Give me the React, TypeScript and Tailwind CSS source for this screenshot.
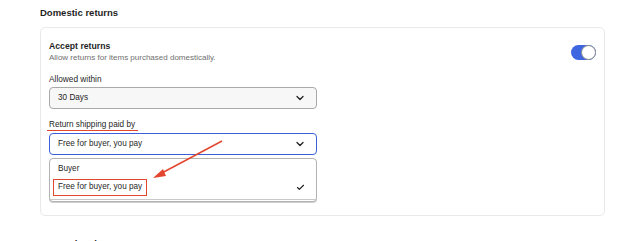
import { ChevronDown, Check } from "lucide-react";

function Toggle({ on }: { on: boolean }) {
  return (
    <div
      className={`mt-[4px] flex h-[15px] w-[25px] items-center rounded-full ${
        on ? "justify-end bg-[#3e66e0]" : "justify-start bg-gray-300"
      }`}
    >
      <div className="h-[15px] w-[15px] rounded-full border border-[#8a8a8a] bg-white" />
    </div>
  );
}

export default function App() {
  return (
    <div className="relative h-[241px] w-[640px] overflow-hidden bg-white pl-[40px] pr-[35px] font-[Liberation_Sans,Arial,sans-serif] text-[#1f1f1f]">
      <h2 className="pt-[7px] text-[9.5px] font-bold leading-[12px]">Domestic returns</h2>

      {/* Card */}
      <div className="mt-[8px] rounded-[5px] border border-[#e9e9e9] px-[8px] pb-[13px] pt-[13px]">
        <div className="flex items-start justify-between">
          <div>
            <div className="text-[8.7px] font-bold leading-[11px]">Accept returns</div>
            <div className="mt-[1px] text-[8px] leading-[10px] text-[#6f6f6f]">
              Allow returns for items purchased domestically.
            </div>
          </div>
          <Toggle on />
        </div>

        <div className="mt-[11px] text-[8.3px] leading-[10px]">Allowed within</div>
        <div className="mt-[3px] flex h-[22px] w-[268px] items-center justify-between rounded-[4px] border border-[#a9a9a9] bg-[#f7f7f7] pl-[8px] pr-[10px]">
          <span className="text-[8.2px]">30 Days</span>
          <ChevronDown className="h-[12px] w-[12px]" strokeWidth={2.5} />
        </div>

        <div className="relative mt-[11px] w-fit text-[8.2px] leading-[10px]">
          Return shipping paid by
          <span className="absolute -left-[2px] -right-[3px] bottom-[-1px] h-[1.5px] bg-[#e3462f]" />
        </div>
        <div className="mt-[3px] flex h-[22px] w-[268px] items-center justify-between rounded-[4px] border-[1.5px] border-[#3a5fd9] bg-white pl-[8px] pr-[10px]">
          <span className="text-[8.2px]">Free for buyer, you pay</span>
          <ChevronDown className="h-[12px] w-[12px]" strokeWidth={2.5} />
        </div>

        {/* Open list */}
        <div className="mt-[3px] w-[268px] rounded-[4px] border border-[#b3b3b3] bg-white pb-[1px] shadow-[0_1px_0_#d0d0d0]">
          <div className="border-b border-[#c9c9c9] pb-[2px]">
            <div className="flex h-[19px] items-center pl-[8px] pt-[1px] text-[8.2px]">Buyer</div>
            <div className="flex h-[19px] items-center justify-between pl-[3px] pr-[11px] text-[8.2px]">
              <span className="flex h-[17px] items-center border-[1.5px] border-[#e3462f] px-[4px]">
                Free for buyer, you pay
              </span>
              <Check className="h-[9px] w-[9px]" strokeWidth={3} />
            </div>
          </div>
        </div>
      </div>

      <h2 className="mt-[22px] text-[9.5px] font-bold leading-[12px]">International returns</h2>

      {/* Annotation arrow */}
      <svg className="absolute left-0 top-0" width="640" height="241" viewBox="0 0 640 241">
        <line x1="222" y1="141" x2="160" y2="174" stroke="#e3462f" strokeWidth="1.5" />
        <polygon points="153,178 163,169 166,176" fill="#e3462f" />
      </svg>
    </div>
  );
}
